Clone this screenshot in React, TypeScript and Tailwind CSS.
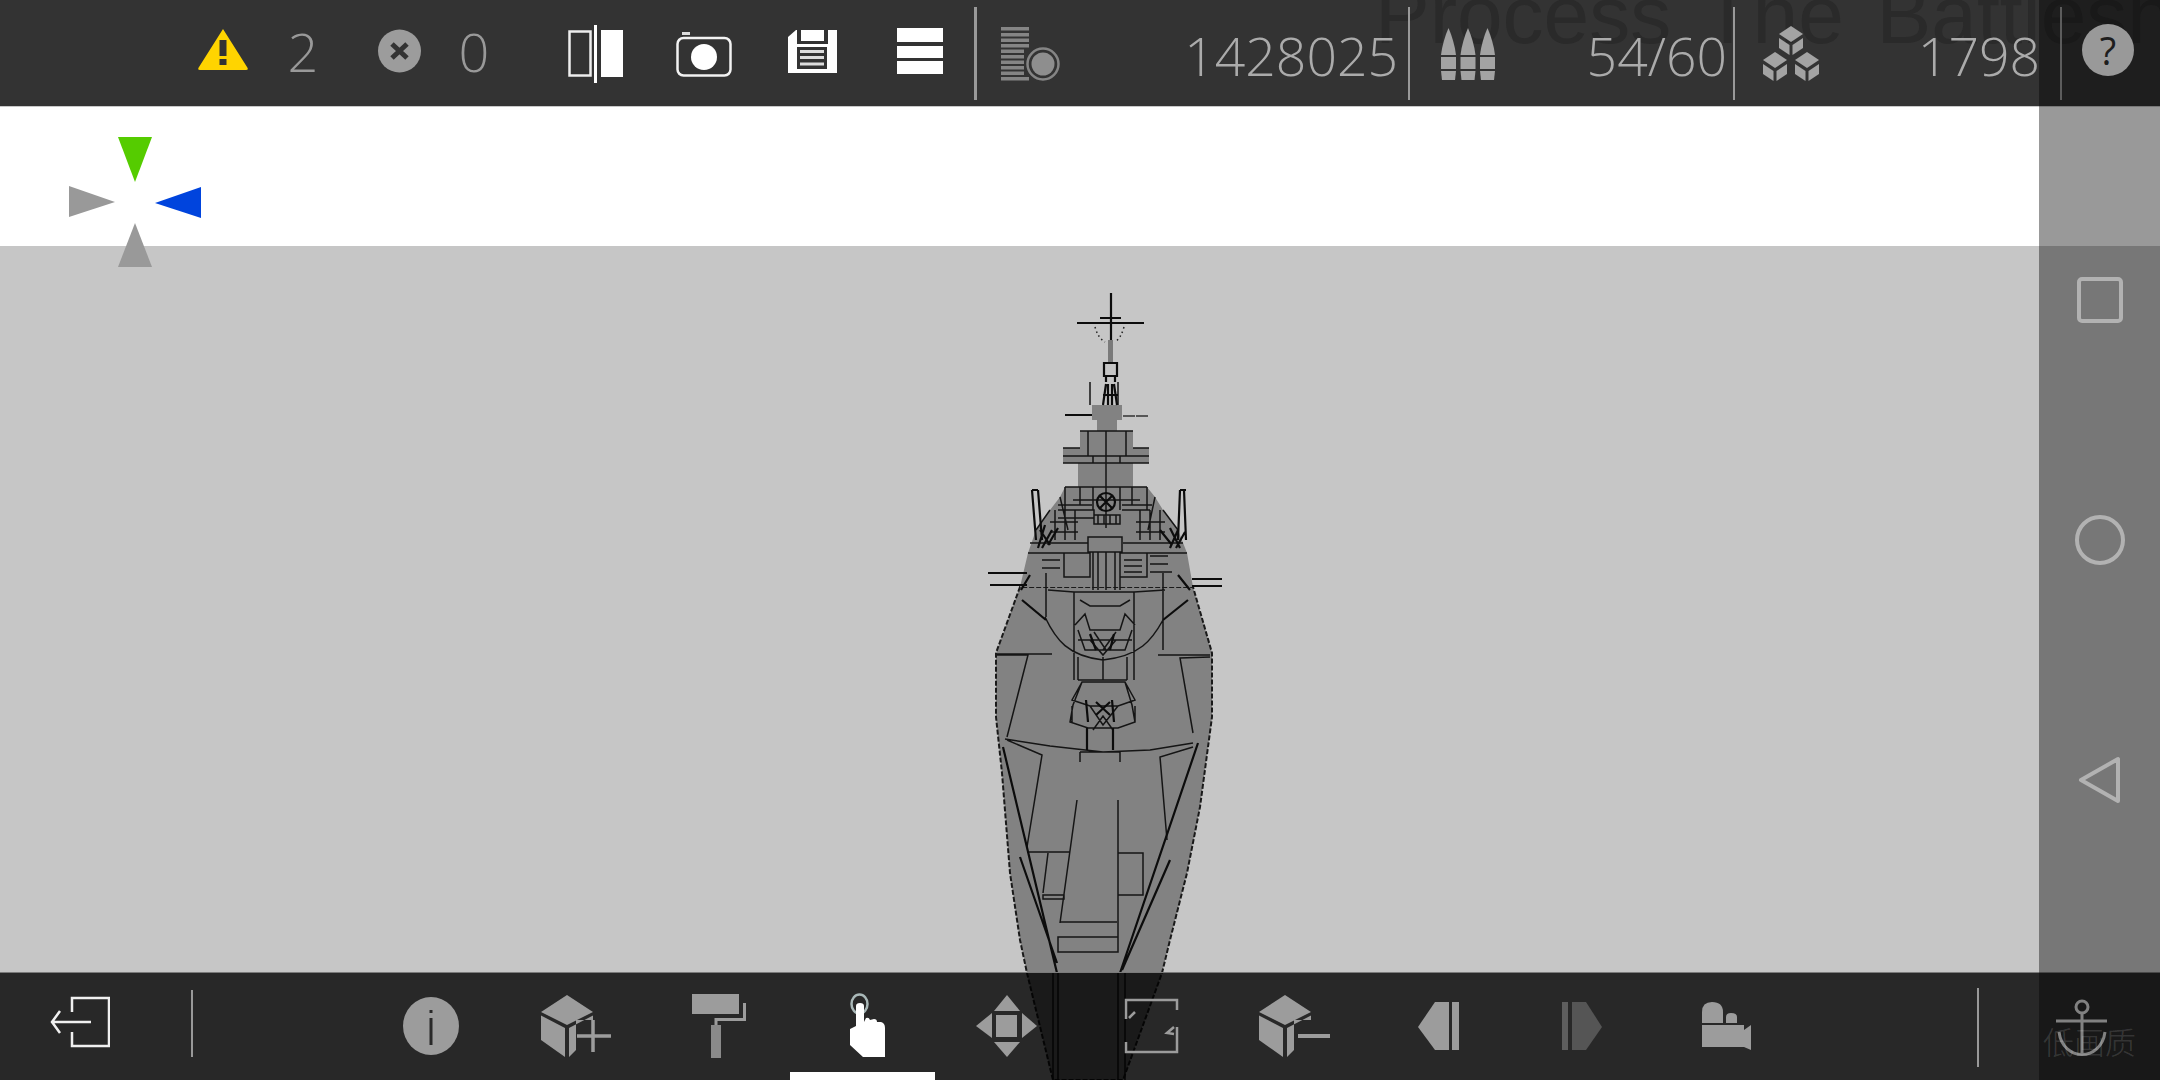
import React from 'react';

const GRAY = '#9c9c9c';

// slot: svg whose viewBox is in page coordinates, so the drawing keeps the reference's numbers
function TopIcon({ x, w, ml, children }: { x: number; w: number; ml: string; children: React.ReactNode }) {
  return (
    <svg className={`${ml} relative h-[106px] shrink-0`} width={w} viewBox={`${x} 0 ${w} 106`}>
      {children}
    </svg>
  );
}

function BottomIcon({ x, w, ml, children }: { x: number; w: number; ml: string; children: React.ReactNode }) {
  return (
    <svg className={`${ml} relative h-[107px] shrink-0`} width={w} viewBox={`${x} 973 ${w} 107`}>
      {children}
    </svg>
  );
}

function Cube({ cx, y }: { cx: number; y: number }) {
  return (
    <g fill="#a3a3a3">
      <polygon points={`${cx},${y} ${cx + 12},${y + 8} ${cx},${y + 16} ${cx - 12},${y + 8}`} />
      <polygon points={`${cx - 12},${y + 12} ${cx - 1.5},${y + 19} ${cx - 1.5},${y + 29} ${cx - 12},${y + 22}`} />
      <polygon points={`${cx + 12},${y + 12} ${cx + 1.5},${y + 19} ${cx + 1.5},${y + 29} ${cx + 12},${y + 22}`} />
    </g>
  );
}

function Bullet({ x }: { x: number }) {
  return (
    <g fill="#a3a3a3">
      <path d={`M${x + 7.5} 28 C${x + 11} 36 ${x + 14} 46 ${x + 15} 55 H${x} C${x + 1} 46 ${x + 4} 36 ${x + 7.5} 28Z`} />
      <rect x={x} y={57} width={15} height={12} />
      <polygon points={`${x},71 ${x + 15},71 ${x + 14},80 ${x + 1},80`} />
    </g>
  );
}

function BlockCube({ dx }: { dx: number }) {
  return (
    <g fill={GRAY} transform={`translate(${dx} 0)`}>
      <polygon points="568,995 594,1012 568,1025 542,1012" />
      <polygon points="542,1015.500 566,1028 566,1057 542,1040" />
      <polygon points="570,1028 594,1015.500 594,1020 577,1020 577,1050 570,1057" />
    </g>
  );
}

function Ship() {
  const hull =
    'M1020 587L996 653V717L1002 773L1010 873L1020 940L1027 973L1053 1080H1123L1162 973L1170 940L1187 873L1200 807L1212 717V653L1193 587Z';
  const house =
    'M1020 587L1028 553L1036 530L1050 510L1060 497L1065 487H1078V463H1063V448H1080V431H1097V420H1092V405H1122V420H1117V431H1133V448H1149V463H1133V487H1147L1155 497L1163 510L1178 530L1187 553L1193 587Z';
  const lines = [
    // deck, aft
    'M1005 739L1050 746L1103 752L1150 750L1193 743',
    'M1053 973V1080M1058 973V1080M1118 973V1080M1125 973V1080',
    'M1118 800V952M1077 800L1060 923M1060 922H1117M1058 937H1118V952H1058Z',
    'M1118 853H1143V895H1118M1027 852H1070M1048 853L1043 893M1043 895H1064V899H1043Z',
    'M1007 740L1042 755L1027 847M1193 747L1160 757L1167 840',
    'M997 655L1028 655L1007 737M1210 657L1180 658L1193 733',
    'M997 654H1052M1158 655H1210',
    'M1080 752H1120M1080 752V762M1120 752V762',
    // after turret
    'M1078 657V680M1127 657V680M1103 657V680M1078 680H1127',
    'M1082 682H1125L1132 705L1135 722L1118 728H1088L1070 722L1073 705Z',
    'M1082 682L1072 700L1090 706H1118L1135 700L1125 682M1072 706V722M1135 706V722M1093 730L1103 716L1113 730M1090 706L1103 725L1118 706',
    // forward deck
    'M1045 617C1056 640 1068 656 1103 660C1140 656 1152 640 1163 620',
    'M1074 592V680M1134 592V680M1048 590L1074 592H1134L1165 590M1046 573V617M1163 573V650',
    'M1093 552V590M1120 552V590M1106 552V590M1098 552V590M1115 552V590M1088 537H1122V552H1088Z',
    'M1064 553H1090V577H1064ZM1120 553H1147V577H1120ZM1030 543H1088M1123 543H1183',
    'M1080 600L1090 606H1120L1130 600M1075 625L1085 614L1090 630H1120L1125 614L1135 625M1078 640H1132',
    'M1078 630L1085 650H1125L1132 630M1090 640L1103 655L1116 640M1094 632L1106 650M1116 632L1103 650',
    'M1124 560H1142M1124 566H1142M1124 572H1142M1150 556H1168M1150 564H1168M1150 572H1172M1060 560H1042M1060 568H1042',
    // bridge
    'M1080 431H1133M1106 431V528M1088 431V456M1126 431V456M1063 456H1149M1063 463H1149M1106 463V487',
    'M1063 448H1080M1133 448H1149M1093 456V463M1120 456V463',
    'M1065 487H1147M1065 487V510M1147 487V510M1073 500H1140M1093 487V510M1120 487V510M1080 487V505M1132 487V505',
    'M1058 505H1092M1122 505H1152M1058 510H1094V518H1058M1150 510H1122M1094 515H1120V524H1094ZM1098 515V524M1104 515V524M1110 515V524M1116 515V524',
    'M1055 540V510M1065 540V510M1075 540V510M1140 540V510M1150 540V510M1160 540V510M1050 522H1078M1136 522H1165M1050 532H1078M1136 532H1165',
    'M1028 553H1090M1120 553H1187M1036 530L1050 510M1178 530L1163 510M1060 497L1068 530M1155 497L1148 530',
    'M1090 405V382M1118 405V382',
  ];
  const thick = [
    'M1111 293V340M1077 323H1144M1100 318H1121',
    'M1065 415H1092M1087 728V750M1113 728V750',
    'M988 573H1027M990 585H1027M1192 579H1222M1192 586H1222',
    'M1104 363H1117V376H1104ZM1106 376V382M1115 376V382',
    'M1103 405L1106 384M1108 405L1108 384M1112 405L1112 384M1117 405L1114 384M1103 395L1118 395',
    'M1032 490L1036 540M1038 490L1042 540M1032 490H1038M1180 490L1178 540M1184 490L1186 540M1180 490H1186',
    'M1040 530L1050 545M1045 525L1038 548M1052 530L1042 548M1058 528L1048 545M1170 528L1180 548M1178 530L1170 548M1160 530L1172 545M1185 532L1176 548',
    'M1097 502a9 9 0 1 0 18 0a9 9 0 1 0 -18 0M1100 496L1112 508M1112 496L1100 508',
    'M1090 634L1096 650M1114 634L1110 650M1086 700L1088 722M1112 700L1114 722M1096 702L1110 715M1110 702L1096 715',
    // long chines running aft
    'M1003 747L1057 973M1020 857L1057 963M1198 743L1120 973M1170 860L1122 970',
    'M1021 590L1030 575M1022 600L1046 620M1190 590L1178 575M1188 600L1163 620',
  ];
  return (
    <svg className="absolute left-[980px] top-[280px]" width={260} height={800} viewBox="980 280 260 800">
      <path d={hull} fill="#828282" stroke="#1a1a1a" strokeWidth="2" strokeDasharray="5 2" />
      <path d={house} fill="#828282" />
      <rect x="1108" y="340" width="5" height="24" fill="#7a7a7a" />
      <path d="M1095 327Q1098 338 1105 342M1124 327Q1121 338 1115 342" fill="none" stroke="#222" strokeWidth="1.500" strokeDasharray="1.500 3" />
      <path d="M1123 416H1148" stroke="#333" strokeWidth="1.500" strokeDasharray="12 1" />
      <path d={lines.join(' ')} fill="none" stroke="#151515" strokeWidth="1.500" />
      <path d={thick.join(' ')} fill="none" stroke="#0c0c0c" strokeWidth="2.200" />
    </svg>
  );
}

export default function App() {
  return (
    <div className="relative flex h-[1080px] w-[2160px] flex-col overflow-hidden bg-[#c6c6c6] font-['Open_Sans',sans-serif]">
      <Ship />

      <div className="h-[246px] shrink-0 bg-white">
        <div className="relative flex h-[107px] items-center overflow-hidden border-b border-[#c8c8c8] bg-[#333333]">
          <span className="absolute -top-[25px] left-[1375px] whitespace-nowrap font-['Liberation_Sans',sans-serif] text-[82px] leading-[80px] text-[#2a2a2a] [word-spacing:10px]">
            Process The Battleship
          </span>

          <TopIcon x={198} w={50} ml="ml-[198px]">
            <path d="M223 29L247 67Q249 70 246 70H200Q197 70 199 67Z" fill="#ffd400" />
            <rect x="219.500" y="40" width="7" height="16" fill="#333" />
            <rect x="219.500" y="59" width="7" height="6" fill="#333" />
          </TopIcon>
          <span className="relative ml-[39px] w-[32px] pb-[4px] text-center text-[54px] font-light leading-none text-[#999999]">2</span>
          <TopIcon x={378} w={44} ml="ml-[59px]">
            <circle cx="399.500" cy="51" r="21.500" fill={GRAY} />
            <path d="M392 44L407 58M407 44L392 58" stroke="#333" strokeWidth="5" />
          </TopIcon>
          <span className="relative ml-[36px] w-[32px] pb-[4px] text-center text-[54px] font-light leading-none text-[#999999]">0</span>

          <TopIcon x={568} w={55} ml="ml-[78px]">
            <rect x="569.500" y="31.500" width="21" height="44" fill="none" stroke="#eee" strokeWidth="2.500" />
            <rect x="594" y="25" width="3" height="58" fill="#fff" />
            <rect x="601" y="30" width="22" height="47" fill="#fff" />
          </TopIcon>
          <TopIcon x={676} w={56} ml="ml-[53px]">
            <rect x="677.500" y="38" width="53" height="37.500" rx="6" fill="none" stroke="#f2f2f2" strokeWidth="2.500" />
            <rect x="682" y="32" width="8" height="3" fill="#ddd" />
            <circle cx="704" cy="57" r="13" fill="#fff" />
          </TopIcon>
          <TopIcon x={788} w={49} ml="ml-[56px]">
            <path d="M796 30H837V73H788V37Z" fill="#fff" />
            <rect x="797" y="30" width="31" height="14" fill="#333" />
            <rect x="801" y="30" width="23" height="11" fill="#fff" />
            <rect x="797" y="47" width="30" height="22" fill="#333" />
            <path d="M800 51.500H824M800 57.500H824M800 64H824" stroke="#ddd" strokeWidth="3" />
          </TopIcon>
          <TopIcon x={896} w={48} ml="ml-[59px]">
            <rect x="897" y="28" width="46" height="14" fill="#fff" />
            <rect x="897" y="46" width="46" height="12" fill="#fff" />
            <rect x="897" y="61" width="46" height="13" fill="#fff" />
          </TopIcon>
          <div className="relative ml-[30px] h-[93px] w-[3px] bg-[#999999]" />
          <TopIcon x={1000} w={60} ml="ml-[23px]">
            {[27, 33, 38.5, 44, 49.5, 55, 60.5, 66, 71.5, 77].map((y, i) => (
              <rect key={y} x="1001" y={y} width={i > 3 && i < 9 ? 23 : 28} height="3.500" fill="#858585" />
            ))}
            <circle cx="1043" cy="64" r="15.500" fill="#333" stroke="#858585" strokeWidth="2.500" />
            <circle cx="1043" cy="64" r="11.500" fill="#8e8e8e" />
          </TopIcon>
          <span className="relative ml-[90px] w-[248px] pt-[6px] text-right text-[53.500px] font-light leading-none text-[#ababab]">1428025</span>
          <div className="relative ml-[10px] h-[93px] w-[2px] bg-[#999999]" />
          <TopIcon x={1441} w={54} ml="ml-[31px]">
            <Bullet x={1441} />
            <Bullet x={1460.5} />
            <Bullet x={1480} />
          </TopIcon>
          <span className="relative ml-[32px] w-[200px] pt-[6px] text-right text-[53.500px] font-light leading-none text-[#ababab]">54/60</span>
          <div className="relative ml-[6px] h-[93px] w-[2px] bg-[#999999]" />
          <TopIcon x={1763} w={58} ml="ml-[28px]">
            <Cube cx={1791} y={26} />
            <Cube cx={1775} y={52} />
            <Cube cx={1807} y={52} />
          </TopIcon>
          <span className="relative ml-[79px] w-[140px] pt-[6px] text-right text-[53.500px] font-light leading-none text-[#ababab]">1798</span>
          <div className="relative ml-[20px] h-[93px] w-[2px] bg-[#999999]" />
          <span className="relative mb-[6px] ml-[20px] flex h-[52px] w-[52px] items-center justify-center rounded-full bg-white text-[38px] leading-none text-[#333333]">
            ?
          </span>
        </div>
      </div>

      <div className="flex-1" />

      <div className="relative flex h-[108px] shrink-0 border-t border-[#7a7a7a] bg-black/80">
        <BottomIcon x={50} w={60} ml="ml-[50px]">
          <path d="M72 1012V998H109V1046H72V1032" fill="none" stroke="#f0f0f0" strokeWidth="2.500" />
          <path d="M52 1022H91M60 1011L52 1022L60 1033" fill="none" stroke="#f0f0f0" strokeWidth="2.500" />
        </BottomIcon>
        <div className="ml-[81px] mt-[17px] h-[67px] w-[2px] bg-[#999999]" />
        <BottomIcon x={404} w={56} ml="ml-[210px]">
          <ellipse cx="432" cy="1026" rx="28" ry="29" fill={GRAY} />
          <path d="M432 1018V1045M432 1010V1013" stroke="#292929" strokeWidth="3" />
        </BottomIcon>
        <BottomIcon x={541} w={71} ml="ml-[81px]">
          <BlockCube dx={0} />
          <path d="M578 1036H612M594 1020V1052" stroke={GRAY} strokeWidth="3.500" />
        </BottomIcon>
        <BottomIcon x={693} w={55} ml="ml-[81px]">
          <rect x="693" y="994" width="47" height="20" fill={GRAY} />
          <path d="M745.500 1003V1019.500H717V1026" fill="none" stroke={GRAY} strokeWidth="3" />
          <rect x="712" y="1025" width="10" height="33" fill="#8a8a8a" />
        </BottomIcon>
        <div className="relative ml-[43px] flex h-[107px] w-[145px] shrink-0 flex-col">
          <svg className="h-[99px] w-[145px]" viewBox="791 973 145 99">
            <ellipse cx="860.500" cy="1004" rx="8" ry="9.500" fill="none" stroke="#a9b8b8" strokeWidth="2.500" />
            <path
              d="M857 1006Q857 1003 861 1003Q865 1003 865 1006V1022L867 1018Q870 1017 871 1020L875 1019Q878 1019 878 1022L882 1022Q886 1023 886 1028V1057H864L851 1045V1029L857 1026Z"
              fill="#fff"
            />
          </svg>
          <div className="h-[8px] w-[145px] bg-white" />
        </div>
        <BottomIcon x={977} w={61} ml="ml-[41px]">
          <g fill={GRAY}>
            <rect x="997" y="1015" width="21" height="22" />
            <polygon points="1008,995 1021,1011 995,1011" />
            <polygon points="995,1042 1021,1042 1008,1057" />
            <polygon points="977,1026 993,1013 993,1038" />
            <polygon points="1038,1026 1023,1013 1023,1038" />
          </g>
        </BottomIcon>
        <BottomIcon x={1125} w={55} ml="ml-[87px]">
          <path d="M1127 1019V1000H1178V1010M1178 1027V1052H1127V1042" fill="none" stroke={GRAY} strokeWidth="2.500" />
          <path d="M1130 1018L1136 1012M1175 1027L1168 1033L1175 1034" fill="none" stroke={GRAY} strokeWidth="2.500" />
        </BottomIcon>
        <BottomIcon x={1260} w={71} ml="ml-[80px]">
          <BlockCube dx={718} />
          <rect x="1299" y="1034" width="32" height="4" fill={GRAY} />
        </BottomIcon>
        <BottomIcon x={1419} w={42} ml="ml-[88px]">
          <polygon points="1419,1027 1436,1002 1450,1002 1450,1050 1436,1050" fill={GRAY} />
          <rect x="1453" y="1002" width="7" height="48" fill={GRAY} />
        </BottomIcon>
        <BottomIcon x={1563} w={41} ml="ml-[102px]">
          <rect x="1563" y="1002" width="6" height="48" fill="#5e5e5e" />
          <polygon points="1603,1027 1587,1002 1573,1002 1573,1050 1587,1050" fill="#555555" />
        </BottomIcon>
        <BottomIcon x={1703} w={49} ml="ml-[99px]">
          <g fill={GRAY}>
            <path d="M1703 1023V1012Q1703 1002 1713 1002Q1724 1002 1724 1012V1023Z" />
            <path d="M1727 1023V1017Q1727 1013 1732 1013Q1738 1013 1738 1017V1023Z" />
            <rect x="1703" y="1025" width="42" height="22" />
            <polygon points="1745,1030 1752,1025 1752,1050 1745,1047" />
          </g>
        </BottomIcon>
        <div className="ml-[226px] mt-[15px] h-[79px] w-[2px] bg-[#999999]" />
        <BottomIcon x={2057} w={52} ml="ml-[77px]">
          <g fill="none" stroke="#d8d8d8" strokeWidth="3">
            <circle cx="2083" cy="1007" r="6" />
            <path d="M2083 1013V1056M2057 1021H2108M2060 1032C2064 1062 2102 1062 2106 1032" />
          </g>
        </BottomIcon>
      </div>

      {/* compass sits across the horizon */}
      <svg className="absolute left-[69px] top-[137px]" width={132} height={130} viewBox="69 137 132 130">
        <polygon points="118,137 152,137 135,182" fill="#55cc00" />
        <polygon points="69,186 69,217 115,202" fill="#999999" />
        <polygon points="201,187 201,218 155,203" fill="#0044dd" />
        <polygon points="135,223 118,267 152,267" fill="#999999" />
      </svg>

      {/* android nav bar, translucent over everything */}
      <div className="absolute bottom-0 right-0 top-0 flex w-[121px] flex-col items-center bg-black/40 pt-[276px]">
        <svg width={48} height={48} viewBox="0 0 48 48">
          <rect x="3" y="3" width="42" height="42" rx="3" fill="none" stroke="#b2b2b2" strokeWidth="4" />
        </svg>
        <svg className="mt-[190px]" width={52} height={52} viewBox="0 0 52 52">
          <circle cx="26" cy="26" r="23" fill="none" stroke="#b2b2b2" strokeWidth="4" />
        </svg>
        <svg className="mt-[188px]" width={48} height={52} viewBox="0 0 48 52">
          <path d="M5 26L42 5V47Z" fill="none" stroke="#b2b2b2" strokeWidth="4" strokeLinejoin="round" />
        </svg>
      </div>

      <span className="absolute left-[2043px] top-[1024px] font-['Noto_Sans_CJK_SC',sans-serif] text-[31px] font-light leading-[34px] text-white/15">
        低画质
      </span>
    </div>
  );
}
